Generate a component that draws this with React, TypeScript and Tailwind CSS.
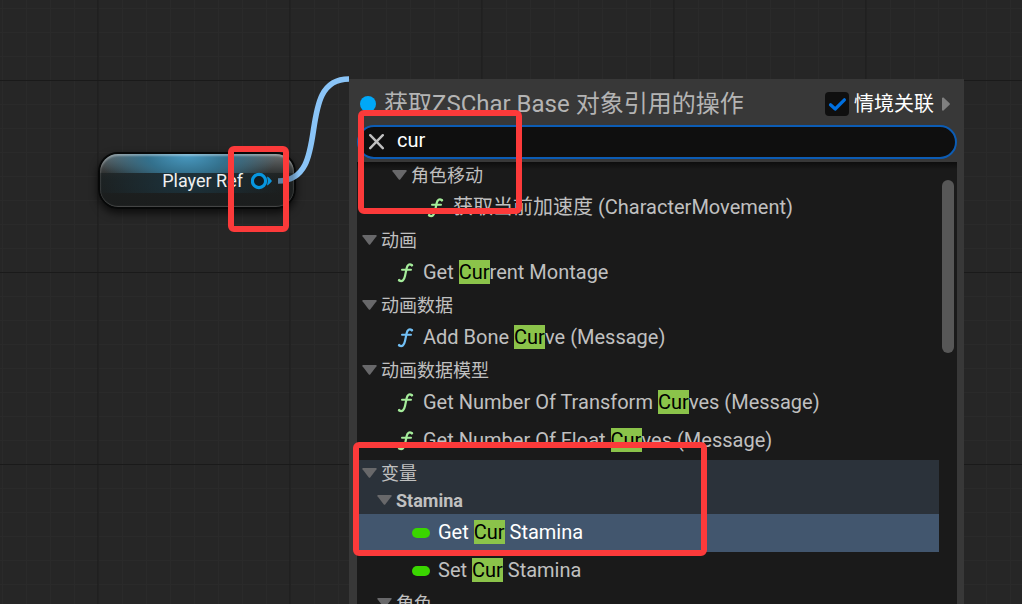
import { useState } from "react";

type Row =
  | { kind: "group"; text: string; depth: number; parentOfActive?: boolean }
  | { kind: "item"; text: string; depth: number; icon: "pure" | "call" | "variable"; active?: boolean };

const rows: Row[] = [
  { kind: "group", text: "角色移动", depth: 2 },
  { kind: "item", text: "获取当前加速度 (CharacterMovement)", depth: 2, icon: "pure" },
  { kind: "group", text: "动画", depth: 0 },
  { kind: "item", text: "Get Current Montage", depth: 0, icon: "pure" },
  { kind: "group", text: "动画数据", depth: 0 },
  { kind: "item", text: "Add Bone Curve (Message)", depth: 0, icon: "call" },
  { kind: "group", text: "动画数据模型", depth: 0 },
  { kind: "item", text: "Get Number Of Transform Curves (Message)", depth: 0, icon: "pure" },
  { kind: "item", text: "Get Number Of Float Curves (Message)", depth: 0, icon: "pure" },
  { kind: "group", text: "变量", depth: 0, parentOfActive: true },
  { kind: "group", text: "Stamina", depth: 1, parentOfActive: true },
  { kind: "item", text: "Get Cur Stamina", depth: 1, icon: "variable", active: true },
  { kind: "item", text: "Set Cur Stamina", depth: 1, icon: "variable" },
  { kind: "group", text: "角色", depth: 1 },
];

const groupIndent = ["pl-[5px]", "pl-5", "pl-[35px]"];
const itemIndent = ["pl-10", "pl-[55px]", "pl-[70px]"];

function Highlight({ text, query }: { text: string; query: string }) {
  const at = query ? text.toLowerCase().indexOf(query.toLowerCase()) : -1;
  if (at < 0) return <>{text}</>;
  return (
    <>
      {text.slice(0, at)}
      <mark className="bg-[#8bc34a] text-black">{text.slice(at, at + query.length)}</mark>
      {text.slice(at + query.length)}
    </>
  );
}

function FunctionIcon({ className }: { className: string }) {
  return (
    <svg viewBox="0 0 18 20" className={`h-5 w-[18px] ${className}`} fill="none" stroke="currentColor" strokeLinecap="round" aria-hidden="true">
      <path d="M15 2.2C12.4.4 10.4 1.8 9.7 5L8 13C7.2 16.8 5.2 19.2 2.4 17.6" strokeWidth="2.2" />
      <path d="M5 6.8H14" strokeWidth="2" />
      <circle cx="14.8" cy="2.4" r="0.8" fill="currentColor" />
      <circle cx="2.2" cy="17.2" r="0.9" fill="currentColor" />
    </svg>
  );
}

function RowIcon({ icon }: { icon: "pure" | "call" | "variable" }) {
  if (icon === "variable") return <span className="h-[10px] w-[18px] rounded-full bg-[#3ad600]" />;
  return <FunctionIcon className={icon === "pure" ? "text-[#a5ec9b]" : "text-[#72c0f5]"} />;
}

function GroupRow({ text, depth, tinted }: { text: string; depth: number; tinted?: boolean }) {
  return (
    <li className={`mr-[18px] ${tinted ? "bg-[#2b323a]" : ""}`}>
      <button type="button" className={`flex h-[27px] w-full items-center gap-1 text-lg leading-[27px] text-[#c0c0c0] ${groupIndent[depth]}`}>
        <svg viewBox="0 0 15 12" className="h-3 w-[15px]" aria-hidden="true">
          <path d="M.8 0H14.2Q15 .4 14.5 1.2L8.2 9.4Q7.5 10 6.8 9.4L.5 1.2Q0 .4.8 0Z" fill="#68686a" />
        </svg>
        <span className={text === "Stamina" ? "font-bold" : ""}>{text}</span>
      </button>
    </li>
  );
}

function ActionMenu() {
  const [query, setQuery] = useState("cur");
  const [contextual, setContextual] = useState(true);

  return (
    <section className="absolute top-[79px] right-[58px] bottom-0 left-[349px] flex flex-col bg-[#383838] pr-[7px] pl-2">
      <header className="flex h-[46px] shrink-0 items-center justify-between pt-1 pr-[6px] pl-[3px]">
        <h1 className="flex items-center gap-2 text-2xl leading-8 whitespace-nowrap text-[#b4b4b4]">
          <span className="size-4 rounded-full bg-[#00a8f8]" />
          获取ZSChar Base 对象引用的操作
        </h1>
        <div className="flex items-center gap-2">
          <label className="flex items-center gap-[5px] text-xl leading-8 whitespace-nowrap text-white">
            <span className="grid">
              <input
                type="checkbox"
                checked={contextual}
                onChange={(e) => setContextual(e.target.checked)}
                className="col-start-1 row-start-1 size-6 appearance-none rounded-sm bg-[#0f0f0f]"
              />
              {contextual && (
                <svg viewBox="0 0 24 24" className="pointer-events-none col-start-1 row-start-1 size-6" aria-hidden="true">
                  <path d="M5.5 12.8 10.2 17 19.4 7.8" fill="none" stroke="#0070e0" strokeWidth="3.2" strokeLinecap="round" strokeLinejoin="round" />
                </svg>
              )}
            </span>
            情境关联
          </label>
          <svg viewBox="0 0 9 14" className="h-[14px] w-[9px]" aria-hidden="true">
            <path d="M0 1Q.6 0 1.5.6L7.6 6.2Q8.2 7 7.6 7.8L1.5 13.4Q.6 14 0 13Z" fill="#808080" />
          </svg>
        </div>
      </header>

      <div className="mb-[3px] flex h-[34px] shrink-0 items-center gap-3 rounded-full border-2 border-[#0c5cb4] bg-[#0f0f0f] pr-4 pl-[10px]">
        <button type="button" aria-label="清除" onClick={() => setQuery("")}>
          <svg viewBox="0 0 16 16" className="size-4" aria-hidden="true">
            <path d="M1.2 1.2 13.8 14.2M13.8 1.2 1.2 14.2" stroke="#c0c0c0" strokeWidth="2.4" strokeLinecap="round" />
          </svg>
        </button>
        <input
          type="text"
          aria-label="搜索"
          value={query}
          onChange={(e) => setQuery(e.target.value)}
          className="min-w-0 flex-1 bg-transparent pb-1 text-xl leading-6 text-white outline-none"
        />
      </div>

      <div className="relative min-h-0 flex-1 overflow-hidden bg-[#1a1a1a]">
        <ul>
          {rows.map((row, i) =>
            row.kind === "group" ? (
              <GroupRow key={i} text={row.text} depth={row.depth} tinted={row.parentOfActive} />
            ) : (
              <li key={i} className={`mr-[18px] ${row.active ? "bg-[#42566e] text-white" : "text-[#c0c0c0]"}`}>
                <button type="button" className={`flex h-[38px] w-full items-center gap-2 text-xl leading-[23px] whitespace-nowrap ${itemIndent[row.depth]}`}>
                  <RowIcon icon={row.icon} />
                  <span className="pb-[2px] whitespace-pre">
                    <Highlight text={row.text} query={query} />
                  </span>
                </button>
              </li>
            )
          )}
        </ul>
        <div className="pointer-events-none absolute inset-x-0 top-0 h-2 bg-linear-to-b from-black/50 to-transparent" />
        <div className="absolute top-[18px] right-[3px] h-[173px] w-3 rounded-full bg-[#575757]" />
      </div>
    </section>
  );
}

function VariableNode() {
  return (
    <div className="absolute top-[152px] left-[98px] flex h-[57px] w-[198px] items-center justify-end gap-2 overflow-hidden rounded-[20px] border-2 border-[#070808] bg-linear-to-b from-[#303232] via-[#1c2020] to-[#1b1d1d] pr-[21px] shadow-[0_4px_8px_rgba(0,0,0,0.7)]">
      {/* gloss on the upper third, tinted by the pin type */}
      <div className="absolute inset-x-0 top-0 h-[19px] bg-[radial-gradient(ellipse_90px_44px_at_45%_0,#4a9cc4,#33708c_45%,transparent),linear-gradient(#6a6e6f,#303333)]" />
      <div className="absolute inset-x-0 top-[19px] h-5 bg-[radial-gradient(ellipse_95px_40px_at_45%_50%,#1c333d,transparent)]" />
      <div className="absolute inset-0 rounded-[18px] shadow-[inset_0_2px_2px_rgba(255,255,255,0.35),inset_0_-1px_1px_rgba(255,255,255,0.2)]" />
      <span className="relative text-lg leading-6 whitespace-nowrap text-[#f0f0f0]">Player Ref</span>
      <svg viewBox="0 0 22 18" className="relative h-[18px] w-[22px]" aria-hidden="true">
        <circle cx="8" cy="9" r="6.6" fill="#101c22" stroke="#0796df" strokeWidth="3.2" />
        <path d="M16 4.6Q18 5 21 9Q18 13 16 13.4Q17.6 9 16 4.6Z" fill="#0796df" />
      </svg>
    </div>
  );
}

function Wire() {
  return (
    <svg viewBox="0 0 80 120" className="absolute top-[70px] left-[269px] h-[120px] w-20" fill="none" aria-hidden="true">
      <defs>
        <linearGradient id="wire" gradientUnits="userSpaceOnUse" x1="9" y1="0" x2="30" y2="0">
          <stop offset="0" stopColor="#597e9f" />
          <stop offset="0.7" stopColor="#6590b5" />
          <stop offset="1" stopColor="#8ac4f7" />
        </linearGradient>
      </defs>
      <path d="M9 111C65 111 24 9 80 9" stroke="url(#wire)" strokeWidth="5.6" />
    </svg>
  );
}

function Callout({ className }: { className: string }) {
  return <div className={`pointer-events-none absolute rounded-md border-6 border-[#fc3a3a] ${className}`} />;
}

export default function App() {
  return (
    <main className="relative min-h-screen overflow-hidden bg-[#262626] font-['Roboto','Noto_Sans_CJK_SC',sans-serif]">
      {/* graph paper: major lines every 8 cells */}
      <svg className="absolute inset-0 size-full" aria-hidden="true">
        <defs>
          <pattern id="minor" width="24" height="24" x="2" y="8" patternUnits="userSpaceOnUse">
            <path d="M0 .5H24M.5 0V24" stroke="#2a2a2a" />
          </pattern>
          <pattern id="major" width="192" height="192" x="97" y="80" patternUnits="userSpaceOnUse">
            <path d="M0 .5H192M1 0V192" stroke="#1a1a1a" />
          </pattern>
        </defs>
        <rect width="100%" height="100%" fill="url(#minor)" />
        <rect width="100%" height="100%" fill="url(#major)" />
      </svg>

      <VariableNode />
      <Wire />
      <ActionMenu />

      <Callout className="top-[146px] left-[228px] h-[86px] w-[61px]" />
      <Callout className="top-[110px] left-[358px] h-[104px] w-[164px]" />
      <Callout className="top-[442px] left-[353px] h-[114px] w-[354px]" />
    </main>
  );
}
